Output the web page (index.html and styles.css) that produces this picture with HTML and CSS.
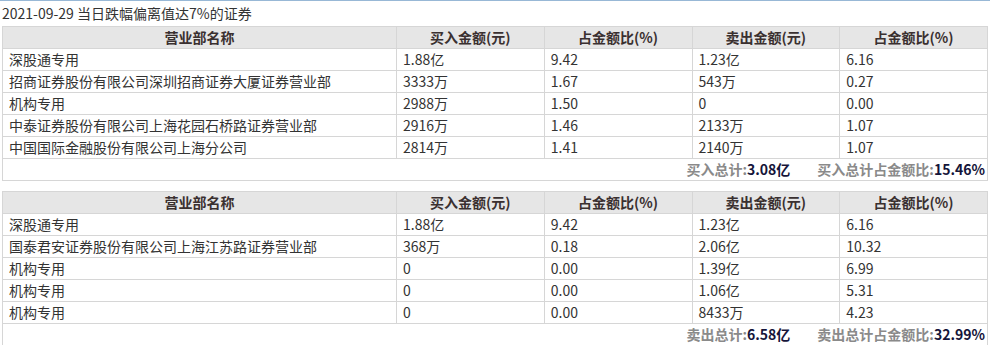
FILE: index.html
```html
<!DOCTYPE html>
<html lang="zh-CN">
<head>
<meta charset="utf-8">
<title>龙虎榜</title>
<link rel="stylesheet" href="styles.css">
</head>
<body>
<div class="page">
  <div class="title">2021-09-29 当日跌幅偏离值达7%的证券</div>
  <table class="grid">
    <colgroup><col class="c-name"><col class="c-num"><col class="c-num"><col class="c-num"><col class="c-num"></colgroup>
    <thead>
      <tr><th>营业部名称</th><th>买入金额(元)</th><th>占金额比(%)</th><th>卖出金额(元)</th><th>占金额比(%)</th></tr>
    </thead>
    <tbody>
      <tr><td>深股通专用</td><td>1.88亿</td><td>9.42</td><td>1.23亿</td><td>6.16</td></tr>
      <tr><td>招商证券股份有限公司深圳招商证券大厦证券营业部</td><td>3333万</td><td>1.67</td><td>543万</td><td>0.27</td></tr>
      <tr><td>机构专用</td><td>2988万</td><td>1.50</td><td>0</td><td>0.00</td></tr>
      <tr><td>中泰证券股份有限公司上海花园石桥路证券营业部</td><td>2916万</td><td>1.46</td><td>2133万</td><td>1.07</td></tr>
      <tr><td>中国国际金融股份有限公司上海分公司</td><td>2814万</td><td>1.41</td><td>2140万</td><td>1.07</td></tr>
      <tr class="total"><td colspan="5"><span class="lbl">买入总计:</span><span class="val">3.08亿</span><span class="lbl gap">买入总计占金额比:</span><span class="val">15.46%</span></td></tr>
    </tbody>
  </table>
  <table class="grid second">
    <colgroup><col class="c-name"><col class="c-num"><col class="c-num"><col class="c-num"><col class="c-num"></colgroup>
    <thead>
      <tr><th>营业部名称</th><th>买入金额(元)</th><th>占金额比(%)</th><th>卖出金额(元)</th><th>占金额比(%)</th></tr>
    </thead>
    <tbody>
      <tr><td>深股通专用</td><td>1.88亿</td><td>9.42</td><td>1.23亿</td><td>6.16</td></tr>
      <tr><td>国泰君安证券股份有限公司上海江苏路证券营业部</td><td>368万</td><td>0.18</td><td>2.06亿</td><td>10.32</td></tr>
      <tr><td>机构专用</td><td>0</td><td>0.00</td><td>1.39亿</td><td>6.99</td></tr>
      <tr><td>机构专用</td><td>0</td><td>0.00</td><td>1.06亿</td><td>5.31</td></tr>
      <tr><td>机构专用</td><td>0</td><td>0.00</td><td>8433万</td><td>4.23</td></tr>
      <tr class="total"><td colspan="5"><span class="lbl">卖出总计:</span><span class="val">6.58亿</span><span class="lbl gap">卖出总计占金额比:</span><span class="val">32.99%</span></td></tr>
    </tbody>
  </table>
</div>
</body>
</html>
```
FILE: styles.css
```css
html, body {
  margin: 0;
  padding: 0;
  background: #ffffff;
}
body {
  font-family: "Noto Sans CJK SC", "Noto Sans", sans-serif;
  font-size: 14px;
  color: #333333;
}
.page {
  border-top: 1px solid #98b8d6;
  padding: 0 2px;
}
.title {
  height: 25px;
  line-height: 25px;
  font-size: 14px;
  color: #333333;
  white-space: nowrap;
}
.grid {
  width: 100%;
  border-collapse: collapse;
  table-layout: fixed;
  border: 1px solid #d6d6d6;
}
.grid.second {
  margin-top: 10px;
}
.c-name { width: 40%; }
.c-num { width: 15%; }
.grid th,
.grid td {
  border: 1px solid #d6d6d6;
  height: 21px;
  line-height: 21px;
  padding: 0 0 0 6px;
  white-space: nowrap;
  overflow: hidden;
  box-sizing: border-box;
}
.grid th {
  background: #e6e6e6;
  font-weight: bold;
  color: #3a3030;
  text-align: center;
  padding: 0;
}
.grid td:first-child {
  padding-left: 6px;
}
.total td {
  text-align: right;
  padding-right: 2px;
  font-weight: bold;
}
.lbl {
  color: #8a8a8a;
}
.lbl.gap {
  margin-left: 27px;
}
.val {
  color: #15153a;
}
```
